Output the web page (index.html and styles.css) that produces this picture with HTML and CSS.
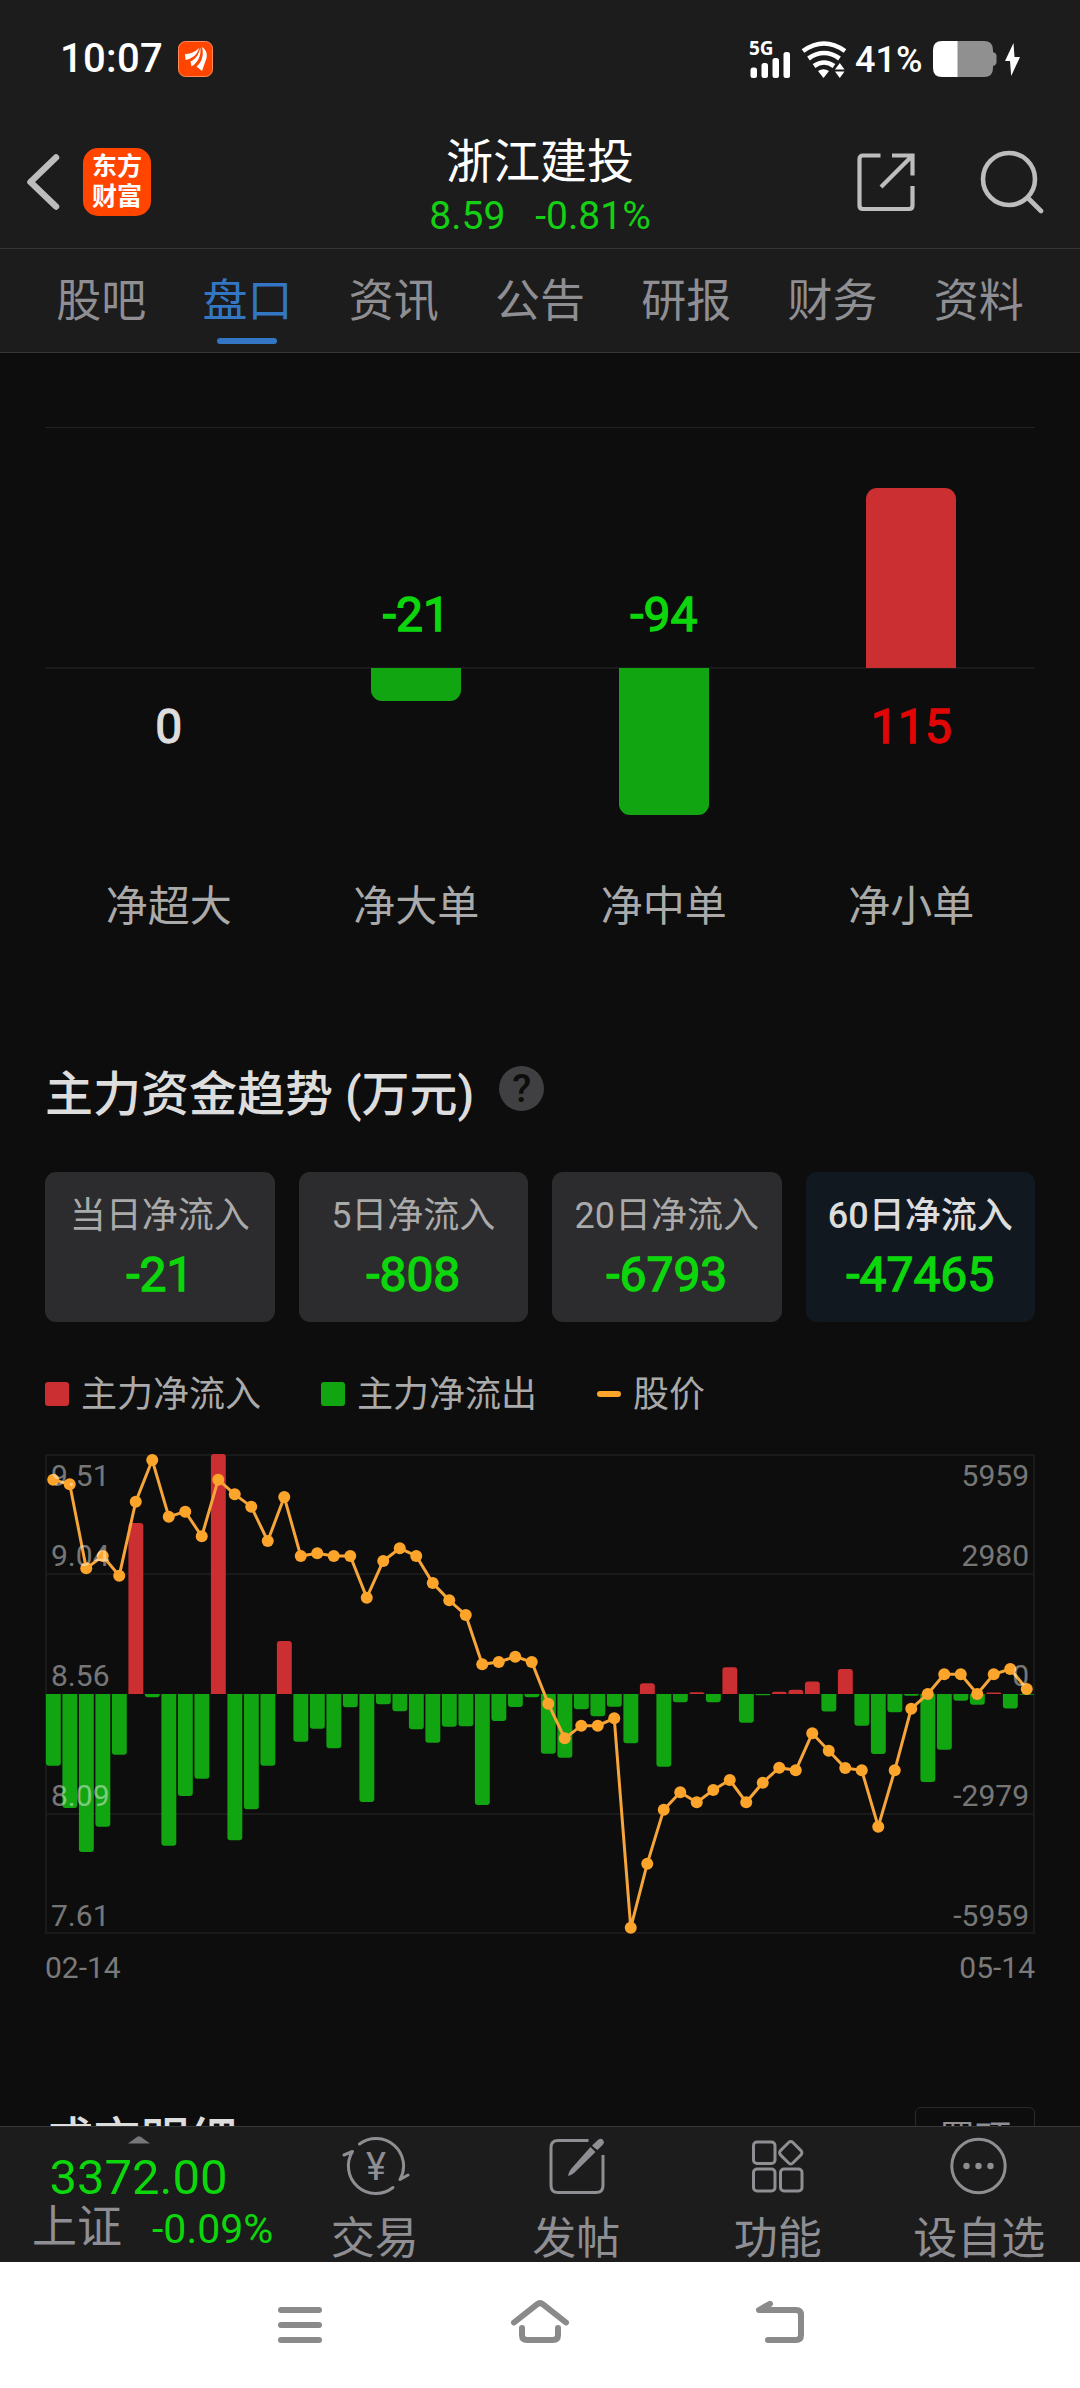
FILE: index.html
```html
<!DOCTYPE html>
<html lang="zh-CN">
<head>
<meta charset="utf-8">
<title>浙江建投 盘口</title>
<link rel="stylesheet" href="styles.css">
</head>
<body>
<div class="statusbar">
  <span class="clock">10:07</span>
  <svg class="app-badge" width="35" height="36" viewBox="0 0 35 36">
    <rect x=".5" y=".5" width="34" height="35" rx="7" fill="#ff4500" stroke="#ff8a5c"/>
    <path d="M7 13C12 13 17 11 21 7C20 13 14 18 7.500 19Z" fill="#fff"/>
    <path d="M22.300 6.500C23.500 14 20 22 13.500 25.500L12.500 20.500C18 18 21 13 22.300 6.500Z" fill="#fff"/>
    <path d="M24 6C29 9 30 15 27.500 20L24 30L18.500 25.500C24 21 26 14 24 6Z" fill="#fff"/>
  </svg>
  <div class="status-right">
    <div class="signal">
      <span class="net">5G</span>
      <svg width="42" height="26" viewBox="0 0 42 26" fill="#fff">
        <rect x="1.500" y="15.500" width="6.500" height="10.500" rx="2.500"/>
        <rect x="12.500" y="11" width="6.500" height="15" rx="2.500"/>
        <rect x="23.500" y="6" width="6.500" height="20" rx="2.500"/>
        <rect x="34.500" y="0" width="6.500" height="26" rx="2.500"/>
      </svg>
    </div>
    <svg class="wifi" width="46" height="37" viewBox="0 0 46 37">
      <g fill="none" stroke="#fff" stroke-width="4.600">
        <path d="M2 10Q23 -5 44 10"/><path d="M7.500 17.500Q23 6.500 38.500 17.500"/><path d="M13 25Q23 18 33 25"/>
      </g>
      <path d="M17 30Q22.500 26.500 28 30L22.500 37Z" fill="#fff"/>
      <path d="M34 28.500L38.800 22L43.500 28.500ZM34 30.500H43.500L38.800 37Z" fill="#fff"/>
    </svg>
    <span class="percent">41%</span>
    <svg class="battery" width="64" height="36" viewBox="0 0 64 36">
      <path d="M24 0H51Q60 0 60 9V11Q63.500 12 63.500 15V21Q63.500 24 60 25V27Q60 36 51 36H24Z" fill="#909090"/>
      <path d="M9 0H24.500V36H9Q0 36 0 27V9Q0 0 9 0Z" fill="#fff"/>
    </svg>
    <svg class="bolt" width="15" height="33" viewBox="0 0 15 33"><path d="M8.500 0L0 18H5L6.200 33L15 14H9.500Z" fill="#fff"/></svg>
  </div>
</div>

<header class="header">
  <div class="header-left">
    <svg width="34" height="58" viewBox="0 0 34 58"><path d="M30 4.500L4.500 29L30 53.500" fill="none" stroke="#bdbdbd" stroke-width="6.500" stroke-linecap="round" stroke-linejoin="round"/></svg>
    <div class="logo"><span>东方</span><span>财富</span></div>
  </div>
  <div class="header-title">
    <h1>浙江建投</h1>
    <div class="quote"><span>8.59</span><span>-0.81%</span></div>
  </div>
  <div class="header-right">
    <svg width="60" height="60" viewBox="0 0 60 60" fill="none" stroke="#bdbdbd" stroke-width="4.200">
      <path d="M24.500 3.500H7Q3.500 3.500 3.500 7V53.500Q3.500 57 7 57H53Q56.500 57 56.500 53.500V34"/>
      <path d="M36 3.500H56.500V23.500M56 4L25 35"/>
    </svg>
    <svg width="64" height="66" viewBox="0 0 64 66" fill="none" stroke="#bdbdbd" stroke-width="4.600" stroke-linecap="round">
      <circle cx="29" cy="30" r="26"/><path d="M48 49L61 62"/>
    </svg>
  </div>
</header>

<nav class="tabs">
  <a>股吧</a><a class="active">盘口</a><a>资讯</a><a>公告</a><a>研报</a><a>财务</a><a>资料</a>
</nav>

<main class="content">
  <section class="orders">
    <div class="order">
      <div class="up"></div>
      <div class="down"><span class="num flat">0</span></div>
      <div class="name">净超大</div>
    </div>
    <div class="order">
      <div class="up"><span class="num fall">-21</span></div>
      <div class="down"><i class="bar out" style="height:33px"></i></div>
      <div class="name">净大单</div>
    </div>
    <div class="order">
      <div class="up"><span class="num fall">-94</span></div>
      <div class="down"><i class="bar out" style="height:147px"></i></div>
      <div class="name">净中单</div>
    </div>
    <div class="order">
      <div class="up"><i class="bar in" style="height:180px"></i></div>
      <div class="down"><span class="num rise">115</span></div>
      <div class="name">净小单</div>
    </div>
  </section>

  <section class="trend">
    <div class="section-head"><h2>主力资金趋势 (万元)</h2><span class="help">?</span></div>
    <div class="cards">
      <div class="card"><span>当日净流入</span><b>-21</b></div>
      <div class="card"><span>5日净流入</span><b>-808</b></div>
      <div class="card"><span>20日净流入</span><b>-6793</b></div>
      <div class="card selected"><span>60日净流入</span><b>-47465</b></div>
    </div>
    <div class="legend">
      <div><i class="swatch in"></i><span>主力净流入</span></div>
      <div><i class="swatch out"></i><span>主力净流出</span></div>
      <div><i class="swatch price"></i><span>股价</span></div>
    </div>
    <div class="plot">
      <svg id="flow" width="990" height="480" viewBox="0 0 990 480">
        <g fill="none" stroke="#1a1a1b" stroke-width="2">
          <rect x="1" y="1" width="988" height="478"/><path d="M0 120H990M0 360H990"/>
        </g>
      </svg>
      <div class="axis"><span>9.51</span><span>9.04</span><span>8.56</span><span>8.09</span><span>7.61</span></div>
      <div class="axis right"><span>5959</span><span>2980</span><span>0</span><span>-2979</span><span>-5959</span></div>
    </div>
    <div class="dates"><span>02-14</span><span>05-14</span></div>
  </section>

  <section class="detail">
    <h2>成交明细</h2><span class="pin">置顶</span>
  </section>
</main>

<footer class="toolbar">
  <div class="index">
    <svg width="22" height="8" viewBox="0 0 22 8"><path d="M0 7.500L9 1Q11 -.3 13 1L22 7.500Z" fill="#77777b"/></svg>
    <div class="index-value">3372.00</div>
    <div class="index-row"><span>上证</span><em>-0.09%</em></div>
  </div>
  <div class="tool">
    <svg width="70" height="60" viewBox="0 0 70 60" fill="none" stroke="#8e8e93" stroke-width="3" stroke-linecap="round" stroke-linejoin="round">
      <path d="M19.500 8A27.500 27.500 0 0 1 60 43.500L68 39"/>
      <path d="M53 51.500A27.500 27.500 0 0 1 12.500 15.500L4 19"/>
      <text class="yen" x="36" y="43.500" text-anchor="middle">¥</text>
    </svg>
    <span>交易</span>
  </div>
  <div class="tool">
    <svg width="60" height="60" viewBox="0 0 60 60" fill="none" stroke="#8e8e93" stroke-width="3">
      <path d="M42.500 4.500H12Q5 4.500 5 11.500V49.500Q5 56.500 12 56.500H50Q57 56.500 57 49.500V19"/>
      <path d="M48.500 12L46 9.500L52.500 3.500Q55 2 57 4Q58.800 6.500 57 8.500L51.500 14ZM44.500 11L49.500 16L28 37Q26 39 22 40Q22.500 36 25 33Z" fill="#8e8e93" stroke="none"/>
    </svg>
    <span>发帖</span>
  </div>
  <div class="tool">
    <svg width="60" height="60" viewBox="0 0 60 60" fill="none" stroke="#8e8e93" stroke-width="3">
      <rect x="5.500" y="6" width="21.500" height="21.500" rx="3.500"/>
      <rect x="5.500" y="33" width="21.500" height="22" rx="3.500"/>
      <rect x="32.500" y="33" width="21.500" height="22" rx="3.500"/>
      <rect x="34" y="8" width="17.500" height="17.500" rx="3" transform="rotate(45 42.750 16.750)"/>
    </svg>
    <span>功能</span>
  </div>
  <div class="tool">
    <svg width="60" height="60" viewBox="0 0 60 60">
      <circle cx="29.500" cy="30" r="26.700" fill="none" stroke="#8e8e93" stroke-width="3"/>
      <g fill="#8e8e93"><circle cx="17.500" cy="30" r="3.200"/><circle cx="29.500" cy="30" r="3.200"/><circle cx="41.500" cy="30" r="3.200"/></g>
    </svg>
    <span>设自选</span>
  </div>
</footer>

<div class="sysnav">
  <svg width="60" height="50" viewBox="0 0 60 50"><path d="M11 10H49M11 25H49M11 40H49"/></svg>
  <svg width="60" height="50" viewBox="0 0 60 50"><path d="M4 22.500L27 4.300Q30 2 33 4.300L56 22.500M12 28V35Q12 40 17 40H43Q48 40 48 35V28"/></svg>
  <svg width="60" height="50" viewBox="0 0 60 50"><path d="M20 3.800L9 10H46Q51 10 51 15V35Q51 40 46 40H18"/></svg>
</div>
<script src="chart.js"></script>
</body>
</html>
```
FILE: styles.css
```css
* { box-sizing: border-box; margin: 0; padding: 0; }
body {
  width: 1080px; height: 2388px; overflow: hidden;
  display: flex; flex-direction: column;
  background: #0d0d0d; color: #ddd;
  font-family: Roboto, "Noto Sans CJK SC", sans-serif;
}
svg { display: block; flex: none; }
h1, h2, b, em { font-weight: 400; font-style: normal; }

.statusbar {
  height: 116px; flex: none; background: #1c1c1c; color: #fff;
  display: flex; align-items: center; padding: 0 60px 0 60px;
}
.clock { font-size: 40px; font-weight: 500; line-height: 40px; width: 118px; letter-spacing: .3px; margin-top: 1px; }
.app-badge { margin-top: 2px; }
.status-right { margin-left: auto; display: flex; align-items: center; height: 38px; margin-top: 2px; }
.signal { width: 42px; margin-right: 10px; height: 37px; display: flex; flex-direction: column; }
.net { font-size: 19px; font-weight: 700; line-height: 14px; height: 11px; font-family: "Noto Sans", sans-serif; }
.wifi { margin-right: 8px; }
.percent { font-size: 36px; font-weight: 500; line-height: 36px; width: 78px; margin-top: 1px; }
.battery { margin-right: 8px; }

.header {
  height: 133px; flex: none; background: #1c1c1c; border-bottom: 1px solid #363636;
  display: grid; grid-template-columns: 1fr 300px 1fr;
}
.header-left { display: flex; align-items: center; gap: 23px; padding-left: 26px; }
.logo {
  width: 68px; height: 68px; border-radius: 15px; background: #ff4500; color: #fff;
  display: flex; flex-direction: column; align-items: center; justify-content: center;
  font-size: 25px; line-height: 30px; font-weight: 700;
}
.header-title { text-align: center; }
.header-title h1 { font-size: 47px; line-height: 56px; margin-top: 18px; color: #fff; }
.quote { display: flex; justify-content: center; gap: 30px; color: #14cf14; font-size: 39px; line-height: 44px; margin-top: 4px; }
.header-right { display: flex; align-items: center; justify-content: flex-end; gap: 64px; padding-right: 36px; }

.tabs {
  height: 104px; flex: none; background: #1c1c1c; border-bottom: 1px solid #363636;
  display: flex; padding: 0 28px;
}
.tabs a {
  flex: 1; display: flex; flex-direction: column; align-items: center;
  font-size: 45px; line-height: 60px; padding-top: 23px; color: #8e8e93;
}
.tabs .active { color: #3377c4; }
.tabs .active::after { content: ""; width: 60px; height: 6px; border-radius: 3px; background: #3377c4; margin-top: 6px; }

.content { flex: 1; min-height: 0; overflow: hidden; padding: 74px 45px 0; }
.in { background: #cb2f31; }
.out { background: #12a512; }
.orders { display: flex; border-top: 1px solid #222; height: 613px; }
.order { flex: 1; text-align: center; }
.up {
  height: 241px; border-bottom: 2px solid #1a1a1b;
  display: flex; flex-direction: column; align-items: center; justify-content: flex-end;
}
.down { height: 188px; display: flex; flex-direction: column; align-items: center; }
.bar { width: 90px; display: block; flex: none; }
.up .bar { border-radius: 11px 11px 0 0; margin-bottom: -1px; }
.down .bar { border-radius: 0 0 11px 11px; margin-top: -1px; position: relative; }
.num, .card b { font-size: 48px; line-height: 56px; -webkit-text-stroke: 1.3px currentColor; }
.up .num { margin-bottom: 24px; }
.down .num { margin-top: 30px; }
.fall { color: #0cd60c; }
.rise { color: #e00606; }
.flat { color: #ddd; }
.name { font-size: 42px; line-height: 60px; margin-top: 20px; color: #aaa; }

.section-head { display: flex; height: 132px; gap: 25px; padding-top: 25px; }
.section-head h2, .detail h2 { font-size: 48px; line-height: 60px; font-weight: 500; color: #ddd; }
.help {
  width: 45px; height: 45px; border-radius: 50%; background: #404042; color: #0d0d0d;
  font-size: 39px; line-height: 46px; font-weight: 500; text-align: center; margin-top: 1px;
}
.cards { display: grid; grid-template-columns: repeat(4, 1fr); gap: 24px; }
.card {
  height: 150px; border-radius: 11px; background: #2c2c2e;
  display: flex; flex-direction: column; align-items: center; padding-top: 19px;
}
.card span { font-size: 36px; line-height: 50px; color: #aaa; }
.card b { color: #0cd60c; margin-top: 6px; }
.card.selected { background: #111820; }
.card.selected span { color: #ddd; font-weight: 500; }
.legend { display: flex; gap: 60px; margin-top: 47px; }
.legend div { display: flex; align-items: center; gap: 12px; height: 50px; font-size: 36px; line-height: 50px; color: #aaa; }
.legend span { padding-top: 2px; }
.swatch { width: 24px; height: 24px; border-radius: 3px; }
.swatch.price { height: 6px; background: #fda42b; }

.plot { display: grid; height: 480px; margin-top: 35px; }
.plot > * { grid-area: 1 / 1; }
.axis {
  display: flex; flex-direction: column; justify-content: space-between; padding: 4px 6px 0;
  font-size: 30px; line-height: 36px; color: rgba(255, 255, 255, .46);
}
.axis span:nth-child(2) { margin-top: -40px; }
.axis.right { text-align: right; }
.dates { display: flex; justify-content: space-between; font-size: 30px; line-height: 36px; margin-top: 16px; color: #7a7a7a; }

.detail { display: flex; justify-content: space-between; margin-top: 121px; }
.detail h2 { margin-top: 4px; flex: none; }
.pin {
  width: 120px; height: 66px; border: 1px solid #2a2a2a; border-radius: 6px;
  text-align: center; font-size: 36px; line-height: 64px; color: #8e8e93;
}

.toolbar {
  height: 136px; flex: none; background: #1c1c1c; border-top: 1px solid #363636;
  display: flex; overflow: hidden;
}
.index { width: 274px; display: flex; flex-direction: column; align-items: center; padding: 9px 0 0 3px; color: #0cd60c; white-space: nowrap; }
.index-value { font-size: 49px; line-height: 60px; margin-top: 4px; }
.index-row { display: flex; gap: 30px; align-items: center; font-size: 41px; line-height: 50px; margin-top: -10px; align-self: flex-start; padding-left: 29px; }
.index-row span { font-size: 45px; color: #8e8e93; line-height: 60px; }
.index-row em { padding-top: 1px; }
.tool { flex: 1; display: flex; flex-direction: column; align-items: center; padding-top: 9px; font-size: 44px; line-height: 60px; color: #8e8e93; }
.tool span { margin-top: 13px; }
.yen { font: 400 38px Roboto, sans-serif; fill: #8e8e93; stroke: none; }

.sysnav { height: 126px; flex: none; background: #fff; display: flex; justify-content: center; gap: 180px; padding-top: 38px; }
.sysnav path { fill: none; stroke: #8a8a8a; stroke-width: 6; stroke-linecap: round; stroke-linejoin: round; }
```
FILE: chart.js
```js
// Daily net main-force flow in plot pixels: positive is inflow, negative is outflow.
const flow = [-71.7, -114, -158, -132.7, -60.7, 171, -3.3, -151.7, -102, -84.7, 240, -146.3, -115.3, -71.7, 53,
  -47.7, -34.7, -54.3, -13.3, -108, -10.3, -17.3, -35.3, -48.7, -32.7, -32.3, -111, -27, -13, -3.3,
  -59.7, -63.7, -15.3, -22.3, -12.7, -49.3, 10.7, -72.7, -8.3, 1.7, -8.3, 26.7, -28.7, -1.3, 2.3,
  4.3, 12.5, -17.5, 25, -31.8, -60, -18.2, -1.8, -87.9, -55.7, -6.8, -10.7, 1.4, -14.6, -0.8];
// Closing price positions, in thirds of a pixel below the scale's origin.
const price = [119, 133, 385, 348, 407, 185, 60, 230, 215, 289, 119, 163, 200, 303, 171,
  348, 340, 348, 348, 473, 363, 325, 348, 429, 481, 525, 673, 666, 650, 666,
  791, 895, 857, 857, 835, 1463, 1271, 1109, 1057, 1087, 1050, 1020, 1087, 1028, 983,
  991, 880, 932, 984, 991, 1160, 991, 806, 762, 703, 703, 762, 703, 687, 747];

const svg = document.getElementById('flow');
const step = 16.5, zero = 240;

function add(name, attrs) {
  const el = document.createElementNS('http://www.w3.org/2000/svg', name);
  for (const key in attrs) el.setAttribute(key, attrs[key]);
  svg.appendChild(el);
}

flow.forEach((v, i) => {
  const x = i * step + 0.9, w = 14.9, s = Math.sign(v);
  const r = Math.min(3, Math.abs(v)), end = zero - v, inner = end + s * r;
  add('path', {
    d: `M${x} ${zero}V${inner}Q${x} ${end} ${x + r} ${end}H${x + w - r}Q${x + w} ${end} ${x + w} ${inner}V${zero}Z`,
    fill: v > 0 ? '#cb2f31' : '#12a512'
  });
});

const points = price.map((p, i) => [i * step + 8.25, p / 3 - 14]);
add('polyline', { points: points.join(' '), fill: 'none', stroke: '#f5a53a', 'stroke-width': 3 });
points.forEach(([cx, cy]) => add('circle', { cx, cy, r: 6, fill: '#fda42b' }));
```
